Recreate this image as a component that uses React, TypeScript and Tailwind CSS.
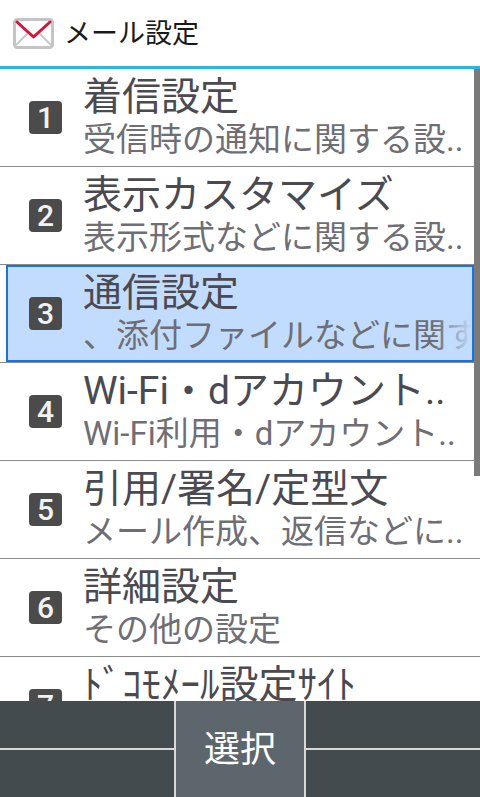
const font = { fontFamily: 'Roboto, "Noto Sans CJK JP", sans-serif' }

const rows = [
  { no: '1', title: '着信設定', sub: '受信時の通知に関する設..' },
  { no: '2', title: '表示カスタマイズ', sub: '表示形式などに関する設..' },
  { no: '3', title: '通信設定', sub: '、添付ファイルなどに関する設定', active: true },
  { no: '4', title: 'Wi-Fi・dアカウント..', sub: 'Wi-Fi利用・dアカウント..' },
  { no: '5', title: '引用/署名/定型文', sub: 'メール作成、返信などに..' },
  { no: '6', title: '詳細設定', sub: 'その他の設定' },
  { no: '7', title: 'ﾄﾞｺﾓﾒｰﾙ設定ｻｲﾄ', sub: '' },
]

const MailIcon = () => (
  <svg width="41" height="31" viewBox="0 0 41 31" className="shrink-0">
    <rect x="1.5" y="1.5" width="38" height="28" rx="3" fill="#fff" stroke="#c4c4c4" strokeWidth="3" />
    <path d="M3 27 L15 15 M38 27 L26 15" stroke="#c8c8c8" strokeWidth="2" fill="none" />
    <path d="M4 4 L20.5 19 L37 4" stroke="#d5143c" strokeWidth="3" fill="none" strokeLinecap="round" strokeLinejoin="round" />
  </svg>
)

const Row = ({ no, title, sub, active }: { no: string; title: string; sub: string; active?: boolean }) => (
  <div className="h-[98px] shrink-0 border-b border-[#8a8a8a] pr-[6px]">
    <div
      className={`relative h-full overflow-hidden flex items-center ${
        active ? 'ml-[6px] border-2 border-[#1c72dc] bg-[#c2dcff] pl-[21px]' : 'pl-[29px]'
      }`}
    >
      <div className="w-[33px] h-[33px] shrink-0 rounded-[4px] bg-[#4b4b4b] flex items-center justify-center text-[30px] font-medium leading-none text-[#f2f2f2]">
        {no}
      </div>
      <div className="ml-[21px] pb-[1px] min-w-0 flex-1 whitespace-nowrap overflow-hidden">
        <div className="text-[39px] leading-[46px] text-[#4a4a50]">{title}</div>
        <div className="text-[33px] leading-[40px] text-[#6e6e74] h-[40px]">{sub}</div>
      </div>
      {active && (
        <div className="absolute right-0 bottom-0 h-[46px] w-[36px] bg-gradient-to-r from-transparent to-[#c2dcff]" />
      )}
    </div>
  </div>
)

export default function App() {
  return (
    <div className="w-[480px] h-[797px] bg-white flex flex-col overflow-hidden" style={font}>
      <header className="h-[69px] shrink-0 border-b-[3px] border-[#2ab4e8] flex items-center pl-[13px]">
        <MailIcon />
        <span className="ml-[10px] pt-[2px] text-[27px] leading-none text-[#1a1a1a]">メール設定</span>
      </header>

      <div className="relative flex-1 min-h-0 overflow-hidden">
        <div className="flex flex-col">
          {rows.map((r) => (
            <Row key={r.no} {...r} />
          ))}
        </div>
        <div className="absolute right-0 top-0 w-[6px] h-[407px] bg-[#7a7a7a]" />
      </div>

      <footer className="h-[96px] shrink-0 bg-[#444b4e] flex">
        <div className="flex-1 flex flex-col">
          <div className="flex-1" />
          <div className="h-[2px] bg-[#d8d8d8]" />
          <div className="h-[47px]" />
        </div>
        <div className="w-[132px] shrink-0 border-x-2 border-[#d8d8d8] bg-[#5d666d] flex items-center justify-center pt-[1px] text-[36px] text-white">
          選択
        </div>
        <div className="flex-1 flex flex-col">
          <div className="flex-1" />
          <div className="h-[2px] bg-[#d8d8d8]" />
          <div className="h-[47px]" />
        </div>
      </footer>
    </div>
  )
}
